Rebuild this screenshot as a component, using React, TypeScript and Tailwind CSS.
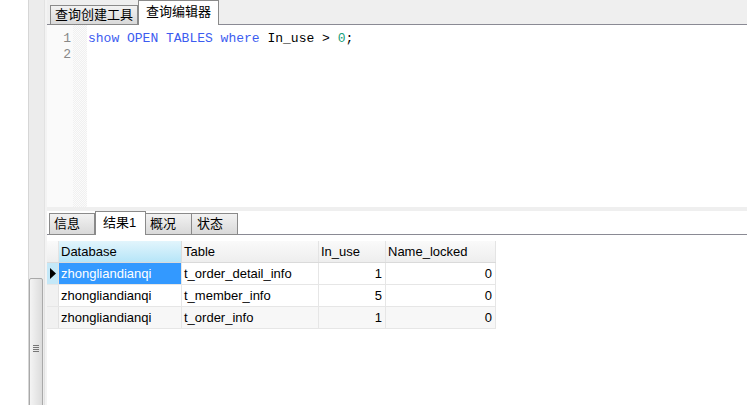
const rows = [
  { db: 'zhongliandianqi', table: 't_order_detail_info', inUse: 1, locked: 0 },
  { db: 'zhongliandianqi', table: 't_member_info', inUse: 5, locked: 0 },
  { db: 'zhongliandianqi', table: 't_order_info', inUse: 1, locked: 0 },
];

const ui = { fontFamily: '"Liberation Sans", "Noto Sans CJK SC", sans-serif' };
const mono = { fontFamily: '"Liberation Mono", monospace' };

const App = () => {
  return (
    <div className="flex h-[405px] w-[747px] overflow-hidden bg-white text-[13px] text-black" style={ui}>
      {/* left blank + side strip */}
      <div className="w-[28px] shrink-0 bg-white" />
      <div className="relative flex w-[19px] shrink-0 border-l border-[#d6d6d6] bg-[#ececec]">
        <div className="ml-auto h-full w-[3px] border-l border-[#e2e2e2] bg-[#f3f3f3]" />
        {/* scrollbar thumb */}
        <div className="absolute left-0 top-[278px] flex h-[140px] w-[14px] items-start justify-center rounded-t-[2px] border border-[#a9a9a9] bg-gradient-to-r from-[#f4f4f4] to-[#dcdcdc]">
          <div className="mt-[66px] flex flex-col gap-[1px]">
            <div className="h-[1px] w-[6px] bg-[#777]" />
            <div className="h-[1px] w-[6px] bg-[#777]" />
            <div className="h-[1px] w-[6px] bg-[#777]" />
            <div className="h-[1px] w-[6px] bg-[#777]" />
          </div>
        </div>
      </div>

      <div className="flex min-w-0 flex-1 flex-col">
        {/* top tabs */}
        <div className="flex h-[25px] shrink-0 items-end border-b border-[#8a8a94] bg-[#efefef] pl-[3px]">
          <div className="mb-[-1px] flex h-[20px] items-center border border-[#8a8a8a] bg-gradient-to-b from-[#f2f2f2] to-[#d9d9d9] px-[4px] text-[13px]">
            查询创建工具
          </div>
          <div className="relative mb-[-1px] flex h-[25px] items-center border border-b-0 border-[#8a8a8a] bg-white px-[7px] pb-[2px] text-[13px]">
            查询编辑器
          </div>
        </div>

        {/* editor */}
        <div className="flex h-[182px] shrink-0 bg-white">
          <div className="w-[26px] shrink-0 bg-[#fafafa] pt-[6px] text-right text-[13px] leading-[16px] text-[#888]" style={mono}>
            <div className="pr-[2px]">1</div>
            <div className="pr-[2px]">2</div>
          </div>
          <div
            className="w-[14px] shrink-0 bg-[#f6f6f6]"
            style={{ backgroundImage: 'repeating-conic-gradient(#f0f0f0 0% 25%, #fbfbfb 0% 50%)', backgroundSize: '2px 2px' }}
          />
          <div className="flex-1 pl-[1px] pt-[6px] text-[13px] leading-[16px] whitespace-pre" style={mono}>
            <span className="text-[#3c5cf0]">show OPEN TABLES where </span>
            <span>In_use &gt; </span>
            <span className="text-[#16a07a]">0</span>
            <span>;</span>
          </div>
        </div>

        {/* splitter */}
        <div className="h-[4px] shrink-0 bg-[#efefef]" />

        {/* bottom tabs */}
        <div className="flex h-[24px] shrink-0 items-end border-b border-[#8a8a94] bg-white pl-[2px]">
          <div className="mb-[-1px] flex h-[22px] w-[46px] items-center border border-[#8a8a8a] bg-gradient-to-b from-[#f2f2f2] to-[#d9d9d9] pl-[4px]">
            信息
          </div>
          <div className="mb-[-1px] flex h-[24px] w-[51px] items-center border border-b-0 border-[#8a8a8a] bg-white pb-[2px] pl-[7px]">
            结果1
          </div>
          <div className="mb-[-1px] flex h-[22px] w-[46px] items-center border border-l-0 border-[#8a8a8a] bg-gradient-to-b from-[#f2f2f2] to-[#d9d9d9] pl-[4px]">
            概况
          </div>
          <div className="mb-[-1px] flex h-[22px] w-[46px] items-center border border-l-0 border-[#8a8a8a] bg-gradient-to-b from-[#f2f2f2] to-[#d9d9d9] pl-[5px]">
            状态
          </div>
        </div>

        {/* grid */}
        <div className="pt-[6px]">
          <div className="flex h-[22px] w-[449px] border-b border-[#dadada]">
            <div className="w-[12px] shrink-0 border-r border-[#e4e4e4] bg-gradient-to-b from-[#fafafa] to-[#eeeeee]" />
            <div className="flex w-[123px] shrink-0 items-center border-r border-[#dcdcdc] bg-gradient-to-b from-[#e2f5fc] to-[#b6e5f8] pl-[2px] pt-[1px]">Database</div>
            <div className="flex w-[137px] shrink-0 items-center border-r border-[#e4e4e4] bg-gradient-to-b from-[#fafafa] to-[#eeeeee] pl-[2px] pt-[1px]">Table</div>
            <div className="flex w-[67px] shrink-0 items-center border-r border-[#e4e4e4] bg-gradient-to-b from-[#fafafa] to-[#eeeeee] pl-[2px] pt-[1px]">In_use</div>
            <div className="flex w-[110px] shrink-0 items-center border-r border-[#e4e4e4] bg-gradient-to-b from-[#fafafa] to-[#eeeeee] pl-[2px] pt-[1px]">Name_locked</div>
          </div>
          {rows.map((r, i) => {
            const sel = i === 0;
            const bg = i === 2 ? 'bg-[#f7f7f7]' : 'bg-white';
            return (
              <div key={i} className={`flex h-[22px] w-[449px] border-b border-[#e6e6e6] ${bg}`}>
                <div className={`flex w-[12px] shrink-0 items-center justify-center border-r border-[#e2e2e2] ${sel ? 'bg-[#c4e8f8]' : 'bg-[#f1f1f1]'}`}>
                  {sel && (
                    <svg width="6" height="11" viewBox="0 0 6 11">
                      <path d="M0 0 L6 5.5 L0 11 Z" fill="#000" />
                    </svg>
                  )}
                </div>
                <div className={`flex w-[123px] shrink-0 items-center border-r border-[#e6e6e6] pl-[2px] pt-[1px] ${sel ? 'bg-[#3399ff] text-white' : ''}`}>{r.db}</div>
                <div className="flex w-[137px] shrink-0 items-center border-r border-[#e6e6e6] pl-[2px] pt-[1px]">{r.table}</div>
                <div className="flex w-[67px] shrink-0 items-center justify-end border-r border-[#e6e6e6] pr-[3px] pt-[1px]">{r.inUse}</div>
                <div className="flex w-[110px] shrink-0 items-center justify-end border-r border-[#e6e6e6] pr-[3px] pt-[1px]">{r.locked}</div>
              </div>
            );
          })}
        </div>
      </div>
    </div>
  );
};

export default App;
